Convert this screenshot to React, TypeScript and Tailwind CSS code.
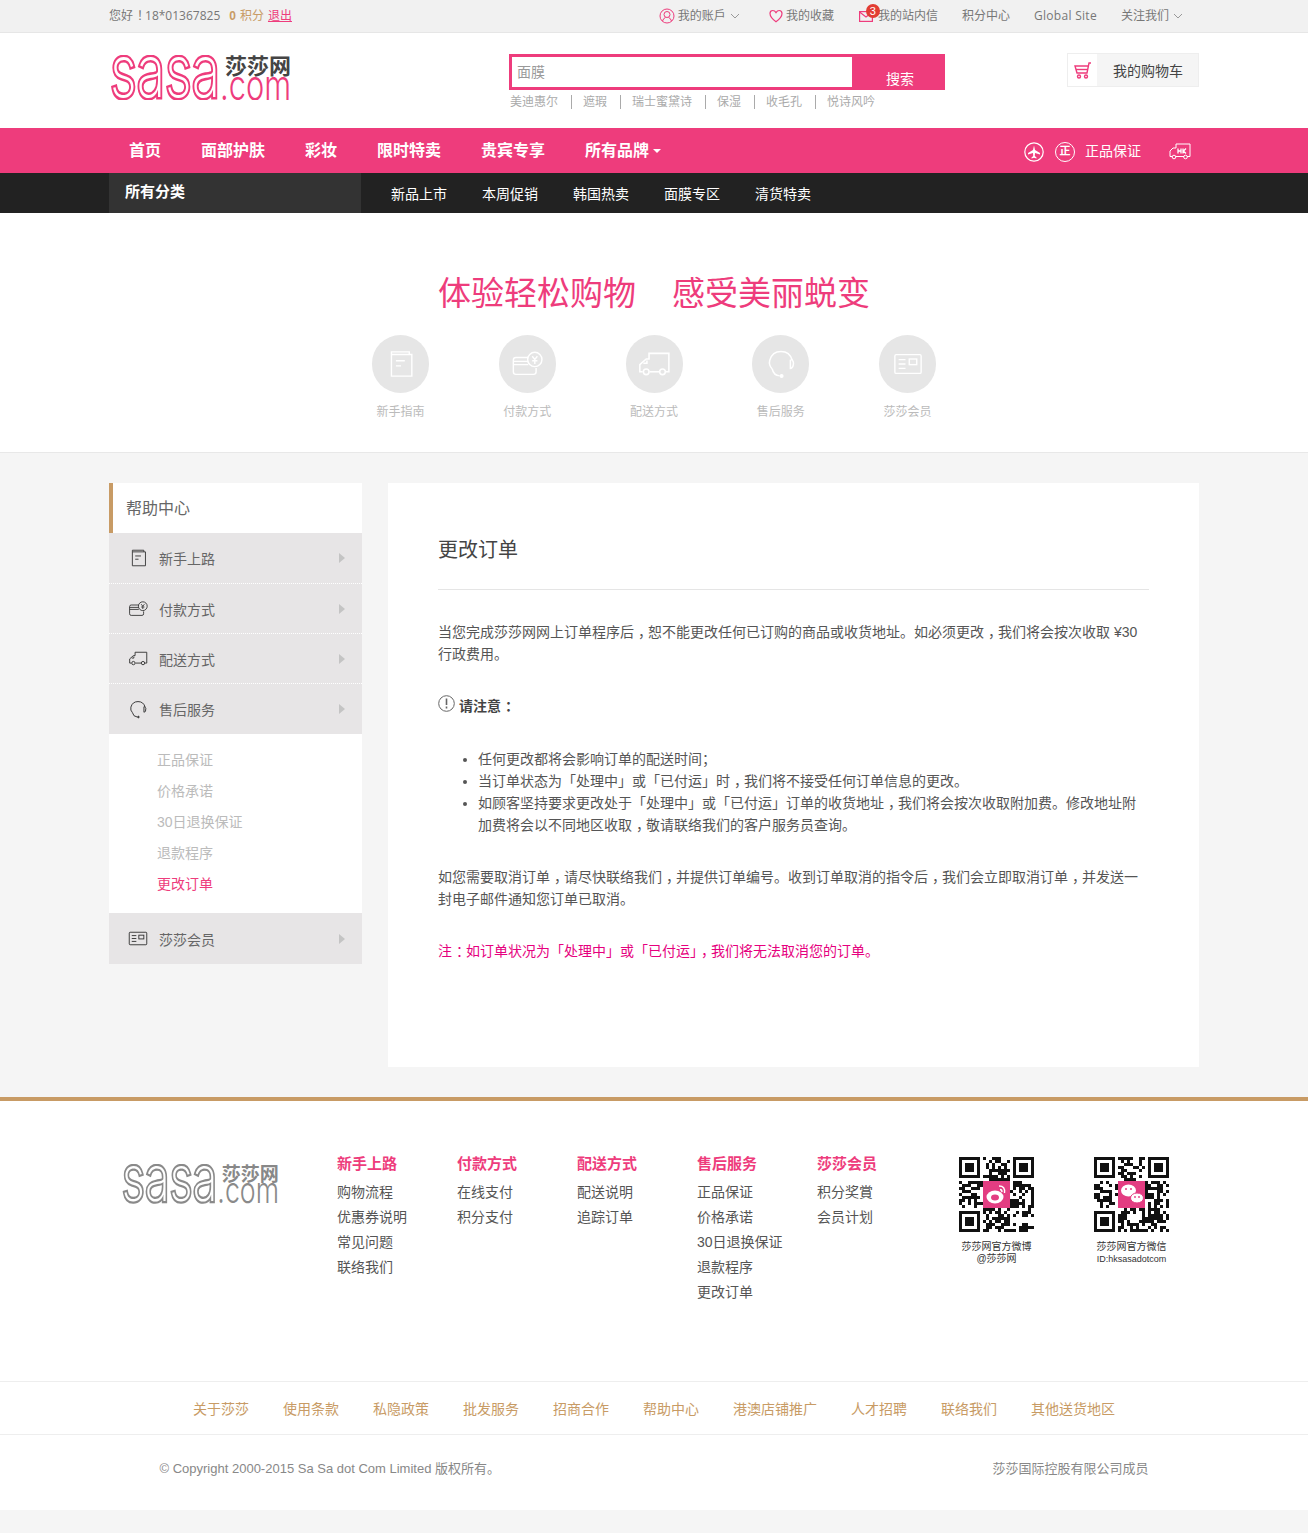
const cjk = "font-['Liberation_Sans','Noto_Sans_CJK_SC',sans-serif]";

function BookIcon({ className = "" }: { className?: string }) {
  return (
    <svg viewBox="0 0 20 22" fill="none" stroke="currentColor" strokeWidth="1.1" className={className}>
      <path d="M2.5 3.5V20.5H18.5V3.5H2.5V1.5H16.5V3.5" />
      <path d="M6 8.5H13M6 12.5H10" />
    </svg>
  );
}

function CardIcon({ className = "" }: { className?: string }) {
  return (
    <svg viewBox="0 0 24 20" fill="none" stroke="currentColor" strokeWidth="1.1" className={className}>
      <path d="M13 5H3.5Q1.5 5 1.5 7V16Q1.5 18 3.5 18H17Q19 18 19 16V13" />
      <path d="M1.5 8H13M1.5 10.5H13" />
      <circle cx="18" cy="6.5" r="5.5" />
      <path d="M16 4l2 2.5 2-2.5M18 6.5V10M16 7.5H20" />
    </svg>
  );
}

function TruckIcon({ className = "" }: { className?: string }) {
  return (
    <svg viewBox="0 0 24 18" fill="none" stroke="currentColor" strokeWidth="1.1" className={className}>
      <path d="M4 14.5H2V9.5L6.5 5.5H8.5V1.5H22.5V14.5H20" />
      <path d="M9 14.5H16" />
      <path d="M4.5 8.5H7V6.5" />
      <circle cx="6.5" cy="14.5" r="2" />
      <circle cx="18" cy="14.5" r="2" />
    </svg>
  );
}

function HeadsetIcon({ className = "" }: { className?: string }) {
  return (
    <svg viewBox="0 0 24 24" fill="none" stroke="currentColor" strokeWidth="1.2" className={className}>
      <path d="M5 16Q2 13 3 9 5 2 12 2 19 2 21 9" />
      <path d="M20 8Q23 10 21.5 14 20.5 15.5 19.5 15.5V8.5" />
      <path d="M5 16Q6 21 11 21.5" />
      <circle cx="12.5" cy="21.5" r="1" fill="currentColor" />
    </svg>
  );
}

function MemberIcon({ className = "" }: { className?: string }) {
  return (
    <svg viewBox="0 0 24 18" fill="none" stroke="currentColor" strokeWidth="1.1" className={className}>
      <rect x="1.5" y="1.5" width="21" height="15" rx="1" />
      <path d="M4.5 5.5H10M4.5 9H10M4.5 12.5H10" />
      <rect x="13" y="5" width="6" height="4.5" />
    </svg>
  );
}

function Logo({ gray = false, className = "" }: { gray?: boolean; className?: string }) {
  const main = gray ? "#8a8a8a" : "#ee3c7c";
  const dark = gray ? "#888888" : "#444444";
  return (
    <svg viewBox="0 0 182 45" className={className}>
      <text transform="translate(1 42) scale(1 1.3)" fontFamily="Inter" fontWeight="200" fontSize="56" textLength="110" lengthAdjust="spacingAndGlyphs" fill="#fff" stroke={main} strokeWidth="4" style={{ paintOrder: "stroke" }}>
        sasa
      </text>
      <text x="116" y="19" fontFamily="Noto Sans CJK SC" fontWeight="700" fontSize="22" fill={dark}>
        莎莎网
      </text>
      <text transform="translate(111 44.5) scale(1 1.42)" fontFamily="Inter" fontWeight="300" fontSize="30" textLength="71" lengthAdjust="spacingAndGlyphs" fill={main}>
        .com
      </text>
    </svg>
  );
}

function QrCode({ seed, children }: { seed: number; children: React.ReactNode }) {
  const size = 25;
  const cells: [number, number][] = [];
  let s = seed;
  for (let y = 0; y < size; y++) {
    for (let x = 0; x < size; x++) {
      s = (s * 1103515245 + 12345) & 0x7fffffff;
      const inFinder = (x < 8 && y < 8) || (x > 16 && y < 8) || (x < 8 && y > 16);
      if (!inFinder && (s >> 16) % 100 < 52) cells.push([x, y]);
    }
  }
  const finders = [
    [0, 0],
    [18, 0],
    [0, 18],
  ];
  return (
    <svg viewBox="0 0 75 75" className="h-[75px] w-[75px]">
      <g shapeRendering="crispEdges">
        {cells.map(([x, y]) => (
          <rect key={`${x}-${y}`} x={x * 3} y={y * 3} width="3" height="3" fill="#111" />
        ))}
        {finders.map(([x, y]) => (
          <g key={`${x}-${y}`}>
            <rect x={x * 3 + 1.5} y={y * 3 + 1.5} width="18" height="18" fill="none" stroke="#111" strokeWidth="3" />
            <rect x={x * 3 + 6} y={y * 3 + 6} width="9" height="9" fill="#111" />
          </g>
        ))}
        <rect x="24" y="24" width="27" height="27" fill="#e33d82" />
      </g>
      {children}
    </svg>
  );
}

// the reference sets ， ： and ！ in the middle of their box, SC puts them on the left
function Zh({ text }: { text: string }) {
  return (
    <>
      {text.split(/([，：！])/).map((part, i) =>
        i % 2 ? (
          <span key={i} className="relative left-[4px]">
            {part}
          </span>
        ) : (
          part
        ),
      )}
    </>
  );
}

const topRight = "flex items-center text-[12px] text-[#777]";

function TopBar() {
  return (
    <div className="h-[33px] border-b border-[#e6e6e6] bg-[#f1f1f1]">
      <div className="mx-auto flex h-[32px] w-[1090px] items-center justify-between pr-4 text-[12px] text-[#777]">
        <div className="flex items-center">
          <span>
            <Zh text="您好！" />
            <span className="font-['Open_Sans',sans-serif]">18*01367825</span>
          </span>
          <span className="ml-[9px] font-bold text-[#c89b65]">0</span>
          <span className="ml-[4px] text-[#c89b65]">积分</span>
          <a className="ml-[4px] text-[#ee3c7c] underline">退出</a>
        </div>
        <div className="flex items-center">
          <div className={topRight}>
            <svg viewBox="0 0 16 16" fill="none" stroke="#ee3c7c" className="mr-[3px] h-4 w-4">
              <circle cx="8" cy="8" r="7" />
              <circle cx="8" cy="6.5" r="3" />
              <path d="M3.5 13Q4.5 10 6.5 9.5M12.5 13Q11.5 10 9.5 9.5" />
            </svg>
            <span>我的账戶</span>
            <svg viewBox="0 0 10 6" fill="none" stroke="#999" className="ml-[4px] h-[6px] w-[10px]">
              <path d="M1 1l4 4 4-4" />
            </svg>
          </div>
          <div className={`${topRight} ml-[29px]`}>
            <svg viewBox="0 0 14 14" fill="none" stroke="#ee3c7c" strokeWidth="1.2" className="mr-[3px] h-[14px] w-[14px]">
              <path d="M7 12.8Q1 8.5 1 4.6 1 1.5 3.8 1.5 5.8 1.5 7 3.6 8.2 1.5 10.2 1.5 13 1.5 13 4.6 13 8.5 7 12.8Z" />
            </svg>
            <span>我的收藏</span>
          </div>
          <div className={`${topRight} relative ml-[25px]`}>
            <svg viewBox="0 0 14 11" fill="none" stroke="#ee3c7c" strokeWidth="1.2" className="mt-[1px] mr-[5px] h-[11px] w-[14px]">
              <rect x="0.6" y="0.6" width="12.8" height="9.8" />
              <path d="M0.6 1l6.4 5 6.4-5" />
            </svg>
            <span>我的站内信</span>
            <span className="absolute top-[-3px] left-[7px] flex h-[14px] w-[14px] items-center justify-center rounded-full bg-[#e23d33] text-[11px] text-white">
              3
            </span>
          </div>
          <span className={`${topRight} ml-[24px]`}>积分中心</span>
          <span className={`${topRight} ml-[24px] font-['Open_Sans',sans-serif] tracking-[0.3px]`}>Global Site</span>
          <div className={`${topRight} ml-[24px]`}>
            <span>关注我们</span>
            <svg viewBox="0 0 10 6" fill="none" stroke="#999" className="ml-[4px] h-[6px] w-[10px]">
              <path d="M1 1l4 4 4-4" />
            </svg>
          </div>
        </div>
      </div>
    </div>
  );
}

function SiteHeader() {
  const hot = ["美迪惠尔", "遮瑕", "瑞士蜜黛诗", "保湿", "收毛孔", "悦诗风吟"];
  return (
    <div className="h-[95px] bg-white">
      <div className="mx-auto flex w-[1090px]">
        <Logo className="mt-[22px] h-[45px] w-[182px]" />
        <div className="mt-[21px] ml-[218px] w-[436px]">
          <div className="flex h-[36px] border-[3px] border-[#ee3c7c] bg-[#ee3c7c]">
            <div className="flex w-[340px] items-center bg-white pt-[1px] pl-[5px] text-[14px] text-[#999]">面膜</div>
            <div className="flex flex-1 items-end justify-center pl-[6px] text-[14px] leading-[16px] text-white">
              <span>搜索</span>
            </div>
          </div>
          <div className="mt-[5px] flex items-center pl-[1px] text-[12px] leading-[14px] text-[#aaa]">
            {hot.map((h, i) => (
              <span key={h} className={i === 0 ? "" : "ml-[13px] border-l border-[#aaa] pl-[11px]"}>
                {h}
              </span>
            ))}
          </div>
        </div>
        <div className="mt-[20px] ml-[122px] flex h-[34px] w-[132px] border border-[#eee] bg-[#f5f5f5]">
          <div className="flex w-[29px] items-center justify-center bg-white">
            <svg viewBox="0 0 18 17" fill="none" stroke="#ee3c7c" strokeWidth="1.4" className="h-[17px] w-[18px]">
              <path d="M17 1L15 1 13 11H3L1 4H14.5" />
              <path d="M2 7.5H13.5" />
              <circle cx="5" cy="14.5" r="1.5" />
              <circle cx="12" cy="14.5" r="1.5" />
            </svg>
          </div>
          <div className="pl-[16px] text-[14px] leading-[34px] text-[#444]">我的购物车</div>
        </div>
      </div>
    </div>
  );
}

function MainNav() {
  const items = ["首页", "面部护肤", "彩妆", "限时特卖", "贵宾专享", "所有品牌"];
  return (
    <div className="h-[45px] bg-[#ee3c7c]">
      <div className="mx-auto flex h-full w-[1090px] items-center justify-between pr-2 pl-5">
        <div className="flex items-center gap-10 text-[16px] font-bold text-white">
          {items.map((it) => (
            <span key={it}>{it}</span>
          ))}
          <span className="ml-[-36px] h-0 w-0 border-x-[4px] border-t-[4px] border-x-transparent border-t-white" />
        </div>
        <div className="flex items-center pt-[2px] text-[14px] text-white">
          <svg viewBox="0 0 20 20" fill="none" stroke="#fff" className="h-5 w-5">
            <circle cx="10" cy="10" r="9.2" strokeWidth="1.2" />
            <path d="M10 3.5L11 8 16 11V12.5L11 11 10.8 14 12.5 15.5V16.5L10 15.8 7.5 16.5V15.5L9.2 14 9 11 4 12.5V11L9 8Z" fill="#fff" stroke="none" />
          </svg>
          <span className="relative ml-[11px] flex h-5 w-5 items-center justify-center rounded-full border-[1.2px] border-white text-[11px] font-bold">
            正
          </span>
          <span className="ml-[10px]">正品保证</span>
          <span className="ml-[28px] flex h-[18px] w-[22px]">
            <svg viewBox="0 0 22 17" fill="none" stroke="#fff" className="h-[17px] w-[22px]">
              <path d="M3 13.5H1V8L4 5H7V1H21V13.5H18" />
              <path d="M7 13.5H15" />
              <circle cx="5" cy="14" r="1.8" />
              <circle cx="16.5" cy="14" r="1.8" />
              <path d="M9 5.5V10.5M12 5.5V10.5M9 8H12M14 5.5V10.5M17 5.5L14.5 8 17 10.5" strokeWidth="1.3" />
            </svg>
          </span>
        </div>
      </div>
    </div>
  );
}

function SubNav() {
  const items = ["新品上市", "本周促销", "韩国热卖", "面膜专区", "清货特卖"];
  return (
    <div className="h-[40px] bg-[#222]">
      <div className="mx-auto flex h-full w-[1090px]">
        <div className="h-full w-[252px] bg-[#333] pt-[9px] pl-4 text-[15px] leading-[20px] font-bold text-white">所有分类</div>
        <div className="flex items-center gap-[35px] pt-[2px] pl-[30px] text-[14px] text-white">
          {items.map((it) => (
            <span key={it}>{it}</span>
          ))}
        </div>
      </div>
    </div>
  );
}

function Hero() {
  const tiles = [
    { label: "新手指南", Icon: BookIcon, size: "h-[28px] w-[26px]" },
    { label: "付款方式", Icon: CardIcon, size: "h-[26px] w-[32px]" },
    { label: "配送方式", Icon: TruckIcon, size: "h-[26px] w-[34px]" },
    { label: "售后服务", Icon: HeadsetIcon, size: "h-[30px] w-[30px]" },
    { label: "莎莎会员", Icon: MemberIcon, size: "h-[24px] w-[30px]" },
  ];
  return (
    <div className="h-[240px] border-b border-[#e8e8e8] bg-white pt-[58px]">
      <div className="flex justify-center gap-[36px] text-[33px] leading-[46px] text-[#ee3c7c]">
        <span>体验轻松购物</span>
        <span>感受美丽蜕变</span>
      </div>
      <div className="mt-[18px] flex justify-center gap-[69.75px]">
        {tiles.map(({ label, Icon, size }) => (
          <div key={label} className="flex w-[57px] flex-col items-center">
            <div className="flex h-[58px] w-[57px] items-center justify-center rounded-full bg-[#e6e6e6] text-white">
              <Icon className={size} />
            </div>
            <span className="mt-[11px] text-[12px] leading-[17px] whitespace-nowrap text-[#bbb]">{label}</span>
          </div>
        ))}
      </div>
    </div>
  );
}

function SideRow({ label, Icon, size, height = "h-[50px]" }: { label: string; Icon: typeof BookIcon; size: string; height?: string }) {
  return (
    <div className={`flex items-center border-b border-dotted border-white bg-[#e7e5e6] pr-[17px] last:border-b-0 ${height}`}>
      <span className="flex w-[50px] justify-center pl-[8px] text-[#333]">
        <Icon className={size} />
      </span>
      <span className="mt-[3px] flex-1 text-[14px] text-[#666]">{label}</span>
      <span className="h-0 w-0 border-y-[5px] border-l-[6px] border-y-transparent border-l-[#c4c4c4]" />
    </div>
  );
}

function Sidebar() {
  const sub = ["正品保证", "价格承诺", "30日退换保证", "退款程序"];
  return (
    <aside className="w-[253px]">
      <div className="h-[50px] border-l-4 border-[#c89b65] bg-white pt-[1px] pl-[13px] text-[16px] leading-[49px] text-[#666]">帮助中心</div>
      <div>
        <SideRow label="新手上路" Icon={BookIcon} size="h-[18px] w-[17px]" height="h-[51px]" />
        <SideRow label="付款方式" Icon={CardIcon} size="h-[16px] w-[20px]" />
        <SideRow label="配送方式" Icon={TruckIcon} size="h-[15px] w-[20px]" />
        <SideRow label="售后服务" Icon={HeadsetIcon} size="h-[19px] w-[20px]" />
      </div>
      <div className="flex h-[179px] flex-col bg-white pt-[11px] pl-12 text-[14px] leading-[31px] text-[#bbb]">
        {sub.map((s) => (
          <span key={s}>{s}</span>
        ))}
        <span className="text-[#ee3c7c]">更改订单</span>
      </div>
      <SideRow label="莎莎会员" Icon={MemberIcon} size="h-[15px] w-[20px]" height="h-[51px]" />
    </aside>
  );
}

function Article() {
  return (
    <main className="h-[584px] w-[811px] bg-white px-[50px] pt-[52px] text-[14px] leading-[22px] text-[#555]">
      <h1 className="border-b border-[#e5e5e5] pb-[23px] text-[20px] leading-[31px] font-normal text-[#444]">更改订单</h1>
      <p className="mt-[31px]">
        <Zh text="当您完成莎莎网网上订单程序后，恕不能更改任何已订购的商品或收货地址。如必须更改，我们将会按次收取 ¥30 行政费用。" />
      </p>
      <div className="mt-[30px] flex items-center font-bold text-[#444]">
        <svg viewBox="0 0 17 17" fill="none" stroke="#666" className="mt-[-5px] mr-1 h-[17px] w-[17px]">
          <circle cx="8.5" cy="8.5" r="7.8" />
          <path d="M8.5 3.5V10M8.5 11.5V13.5" strokeWidth="1.6" />
        </svg>
        <span>
          <Zh text="请注意：" />
        </span>
      </div>
      <ul className="mt-[31px] list-disc pl-10">
        <li>任何更改都将会影响订单的配送时间；</li>
        <li>
          <Zh text="当订单状态为「处理中」或「已付运」时，我们将不接受任何订单信息的更改。" />
        </li>
        <li>
          <Zh text="如顾客坚持要求更改处于「处理中」或「已付运」订单的收货地址，我们将会按次收取附加费。修改地址附加费将会以不同地区收取，敬请联络我们的客户服务员查询。" />
        </li>
      </ul>
      <p className="mt-[30px]">
        <Zh text="如您需要取消订单，请尽快联络我们，并提供订单编号。收到订单取消的指令后，我们会立即取消订单，并发送一封电子邮件通知您订单已取消。" />
      </p>
      <p className="mt-[30px] text-[#e6007e]">
        <Zh text="注：如订单状况为「处理中」或「已付运」，我们将无法取消您的订单。" />
      </p>
    </main>
  );
}

function FooterLinks() {
  const cols = [
    { title: "新手上路", links: ["购物流程", "优惠券说明", "常见问题", "联络我们"] },
    { title: "付款方式", links: ["在线支付", "积分支付"] },
    { title: "配送方式", links: ["配送说明", "追踪订单"] },
    { title: "售后服务", links: ["正品保证", "价格承诺", "30日退换保证", "退款程序", "更改订单"] },
    { title: "莎莎会员", links: ["积分奖賞", "会员计划"] },
  ];
  return (
    <div className="mx-auto flex h-[280px] w-[1090px] pt-[54px]">
      <div className="w-[228px] pt-[9px] pl-3">
        <Logo gray className="h-[40px] w-[158px]" />
      </div>
      {cols.map((c) => (
        <div key={c.title} className="w-[120px] text-[14px] leading-[25px] text-[#555]">
          <div className="mb-[7px] text-[15px] leading-[18px] font-bold text-[#ee3c7c]">{c.title}</div>
          {c.links.map((l) => (
            <div key={l}>{l}</div>
          ))}
        </div>
      ))}
      <div className="flex flex-col items-center pt-[2px] pl-[2px] text-[10px] leading-[12px] text-[#333]">
        <div className="ml-[20px] flex w-[210px] gap-[60px]">
          <QrCode seed={7}>
            <ellipse cx="36" cy="40" rx="8.5" ry="6.5" fill="#fff" />
            <ellipse cx="36" cy="40.5" rx="4" ry="3" fill="#e33d82" />
            <path d="M40 29Q46.5 29 45.5 36M41 32.5Q43 32.5 43 35" fill="none" stroke="#fff" strokeWidth="1.4" />
          </QrCode>
          <QrCode seed={31}>
            <ellipse cx="34.5" cy="33.5" rx="7.5" ry="6" fill="#fff" />
            <ellipse cx="43" cy="41" rx="6.5" ry="5" fill="#fff" stroke="#e33d82" strokeWidth="1" />
            <circle cx="32" cy="32" r="1" fill="#e33d82" />
            <circle cx="37" cy="32" r="1" fill="#e33d82" />
            <circle cx="41" cy="40" r="0.9" fill="#e33d82" />
            <circle cx="45" cy="40" r="0.9" fill="#e33d82" />
          </QrCode>
        </div>
        <div className="mt-[9px] ml-[20px] flex w-[210px] gap-[60px] text-center whitespace-nowrap">
          <div className="flex w-[75px] flex-col items-center">
            <span>莎莎网官方微博</span>
            <span>@莎莎网</span>
          </div>
          <div className="flex w-[75px] flex-col items-center">
            <span>莎莎网官方微信</span>
            <span className="text-[9px]">ID:hksasadotcom</span>
          </div>
        </div>
      </div>
    </div>
  );
}

function Footer() {
  const links = ["关于莎莎", "使用条款", "私隐政策", "批发服务", "招商合作", "帮助中心", "港澳店铺推广", "人才招聘", "联络我们", "其他送货地区"];
  return (
    <footer className="border-t-[4px] border-[#c89b65] bg-white">
      <FooterLinks />
      <div className="flex h-[54px] items-center justify-center gap-[34px] border-y border-[#eee] pt-[2px] text-[14px] text-[#c89b65]">
        {links.map((l) => (
          <span key={l}>{l}</span>
        ))}
      </div>
      <div className="mx-auto flex h-[75px] w-[989px] items-center justify-between pb-[8px] text-[13px] text-[#888]">
        <span>© Copyright 2000-2015 Sa Sa dot Com Limited 版权所有。</span>
        <span>莎莎国际控股有限公司成员</span>
      </div>
    </footer>
  );
}

export default function App() {
  return (
    <div className={`min-h-[1533px] bg-[#f5f5f5] ${cjk}`}>
      <TopBar />
      <SiteHeader />
      <MainNav />
      <SubNav />
      <Hero />
      <div className="mx-auto flex w-[1090px] justify-between py-[30px]">
        <Sidebar />
        <Article />
      </div>
      <Footer />
    </div>
  );
}
